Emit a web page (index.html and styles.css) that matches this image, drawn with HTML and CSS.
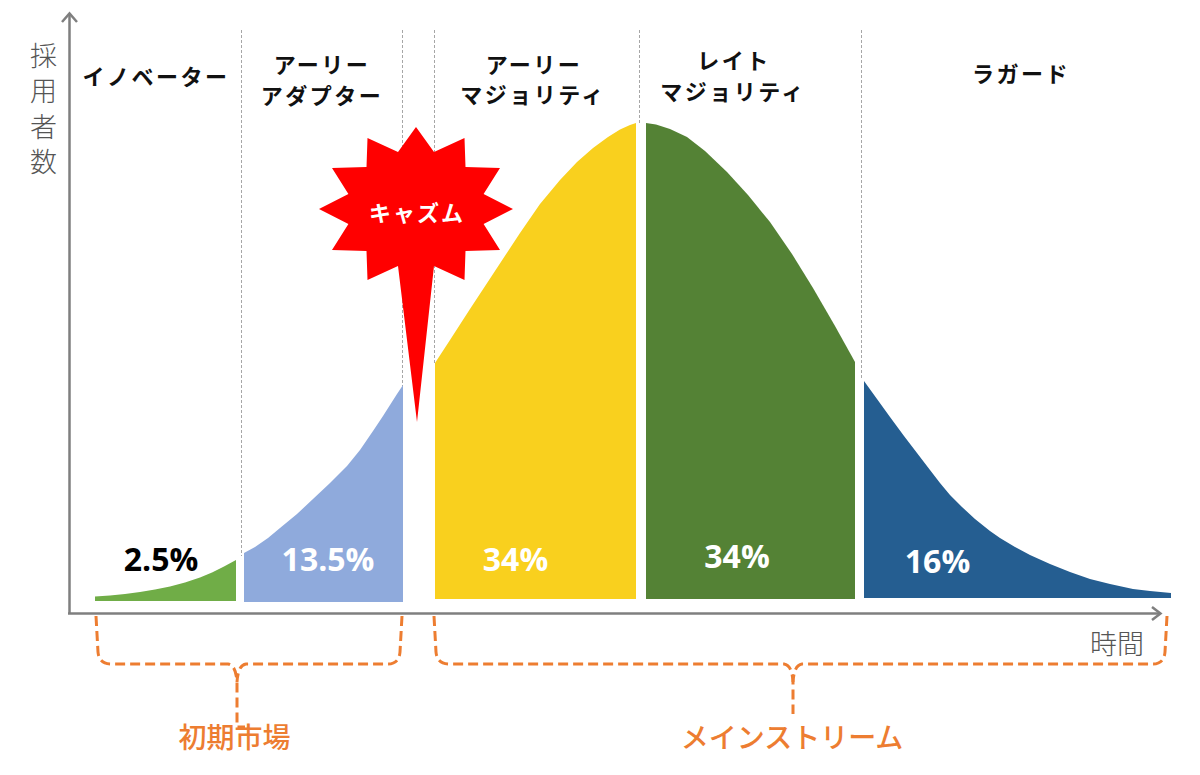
FILE: index.html
```html
<!DOCTYPE html>
<html lang="ja">
<head>
<meta charset="utf-8">
<title>キャズム理論</title>
<link rel="stylesheet" href="styles.css">
</head>
<body>
<div class="stage">
<svg class="chart" width="1200" height="775" viewBox="0 0 1200 775" xmlns="http://www.w3.org/2000/svg">
  <!-- dashed separators -->
  <g class="sep">
    <line x1="241.5" y1="30" x2="241.5" y2="556"/>
    <line x1="402.5" y1="30" x2="402.5" y2="386"/>
    <line x1="434.5" y1="30" x2="434.5" y2="364"/>
    <line x1="639.5" y1="30" x2="639.5" y2="124"/>
    <line x1="861.5" y1="30" x2="861.5" y2="380"/>
  </g>

  <!-- bell curve segments -->
  <path class="seg-innov" d="M95,601 L95,596.5 L110,595.5 L125,594 L140,592 L155,589.5 L170,586.5 L185,582.5 L200,577.5 L212,572.5 L224,566.5 L236,560 L236,601 Z"/>
  <path class="seg-early" d="M244,602 L244,553 L255,547 L268,538 L280,528 L297,514 L313,499 L330,483 L347,466 L360,450 L373,431 L383,416 L390,405 L397,394 L403,385 L403,602 Z"/>
  <path class="seg-emaj" d="M435,599 L435,363 L450,340 L470,309 L495,271 L520,233 L540,204 L560,180 L577,162 L593,148 L608,137 L620,129.5 L630,125 L636,123 L636,599 Z"/>
  <path class="seg-lmaj" d="M646,599 L646,123 L656,124.5 L670,129 L687,137 L705,151 L727,172 L748,195 L770,222 L792,254 L813,288 L835,326 L855,362 L855,599 Z"/>
  <path class="seg-lag" d="M864,598 L864,381 L877,399 L890,417 L904,436 L917,453 L930,470 L940,483 L950,495 L962,507 L975,519 L990,531 L1000,538 L1015,547 L1030,555 L1050,564 L1070,572 L1090,579 L1110,584 L1133,589 L1150,591 L1171,593 L1171,598 Z"/>

  <!-- axes -->
  <g class="axis">
    <line x1="69.5" y1="614" x2="69.5" y2="14"/>
    <polyline points="62,22 69.5,13.5 77,22"/>
    <line x1="68" y1="613.5" x2="1160" y2="613.5"/>
    <polyline points="1152,607 1160.5,613.5 1152,620"/>
  </g>

  <!-- chasm burst -->
  <polygon class="burst" points="416,127 434,152 464.5,138 465.5,167 500,168 483.6,194 513,209 483.6,224 500,250 465.5,251 464.5,280 434,266 417,422 398,266 367.5,280 366.5,251 332,250 348.4,224 319,209 348.4,194 332,168 366.5,167 367.5,138 398,152"/>
  <text class="burst-text" x="417" y="221" text-anchor="middle">キャズム</text>

  <!-- axis titles -->
  <text class="axis-title axis-title-v" x="43.5" y="42">採用者数</text>
  <text class="axis-title" x="1090" y="654">時間</text>

  <!-- segment titles -->
  <text class="label" x="156" y="85" text-anchor="middle">イノベーター</text>
  <text class="label" x="322" y="73" text-anchor="middle">アーリー</text>
  <text class="label" x="322" y="104" text-anchor="middle">アダプター</text>
  <text class="label" x="534" y="73" text-anchor="middle">アーリー</text>
  <text class="label" x="533" y="103" text-anchor="middle">マジョリティ</text>
  <text class="label" x="734" y="69" text-anchor="middle">レイト</text>
  <text class="label" x="733" y="100" text-anchor="middle">マジョリティ</text>
  <text class="label" x="1021" y="82" text-anchor="middle">ラガード</text>

  <!-- percentages -->
  <text class="pct pct-dark" x="161" y="571" text-anchor="middle">2.5%</text>
  <text class="pct" x="328" y="571" text-anchor="middle">13.5%</text>
  <text class="pct" x="515.5" y="571" text-anchor="middle">34%</text>
  <text class="pct" x="737" y="568" text-anchor="middle">34%</text>
  <text class="pct" x="937.5" y="573" text-anchor="middle">16%</text>

  <!-- brackets -->
  <g class="brace">
    <path d="M96,616 L98,652 Q99,664 111,664 L228,664 Q236,665 237,682 L237,727 L245,727"/>
    <path d="M402,616 L400,652 Q399,664 388,664 L246,664 Q238,665 237,682"/>
    <path d="M434,616 L436,652 Q437,664 449,664 L784,664 Q792,665 793,682 L793,714"/>
    <path d="M1167,616 L1165,652 Q1164,664 1153,664 L802,664 Q794,665 793,682"/>
  </g>
  <text class="market" x="234.5" y="748" text-anchor="middle">初期市場</text>
  <text class="market" x="792" y="748" text-anchor="middle">メインストリーム</text>
</svg>
</div>
</body>
</html>
```

FILE: styles.css
```css
html, body {
  margin: 0;
  padding: 0;
  background: #ffffff;
}

.stage {
  width: 1200px;
  height: 775px;
  overflow: hidden;
  background: #ffffff;
}

.chart {
  display: block;
}

.sep line {
  stroke: #a6a6a6;
  stroke-width: 1;
  stroke-dasharray: 3 2;
}

.seg-innov { fill: #70ad47; }
.seg-early { fill: #8faadc; }
.seg-emaj  { fill: #f9d01e; }
.seg-lmaj  { fill: #548235; }
.seg-lag   { fill: #255e91; }

.axis line,
.axis polyline {
  stroke: #7f7f7f;
  stroke-width: 2.5;
  fill: none;
}

.burst {
  fill: #ff0000;
}

.burst-text {
  font-family: "Noto Sans CJK JP", sans-serif;
  font-size: 22px;
  font-weight: 700;
  letter-spacing: 2px;
  fill: #ffffff;
}

.axis-title {
  font-family: "Noto Sans CJK JP", sans-serif;
  font-size: 27px;
  font-weight: 300;
  fill: #555555;
}

.axis-title-v {
  writing-mode: vertical-rl;
  letter-spacing: 8.5px;
}

.label {
  font-family: "Noto Sans CJK JP", sans-serif;
  font-size: 22px;
  font-weight: 700;
  letter-spacing: 2.5px;
  fill: #111111;
}

.pct {
  font-family: "Open Sans", sans-serif;
  font-size: 32px;
  font-weight: 700;
  fill: #ffffff;
}

.pct-dark {
  fill: #000000;
}

.brace path {
  fill: none;
  stroke: #ed7d31;
  stroke-width: 3;
  stroke-dasharray: 10 5;
}

.market {
  font-family: "Noto Sans CJK JP", sans-serif;
  font-size: 28px;
  font-weight: 500;
  fill: #ed7d31;
}
```
